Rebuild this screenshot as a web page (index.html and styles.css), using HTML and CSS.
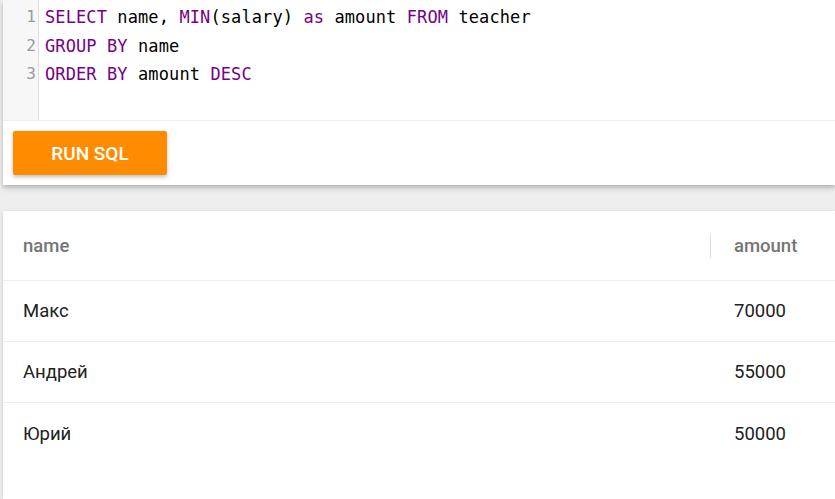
FILE: index.html
```html
<!DOCTYPE html>
<html lang="ru">
<head>
<meta charset="utf-8">
<title>SQL</title>
<link rel="stylesheet" href="styles.css">
</head>
<body>
<div class="editor-card">
  <div class="editor">
    <div class="gutter">
      <div class="ln">1</div>
      <div class="ln">2</div>
      <div class="ln">3</div>
    </div>
    <div class="code">
      <div class="line"><span class="kw">SELECT</span> name, <span class="kw">MIN</span>(salary) <span class="kw">as</span> amount <span class="kw">FROM</span> teacher</div>
      <div class="line"><span class="kw">GROUP</span> <span class="kw">BY</span> name</div>
      <div class="line"><span class="kw">ORDER</span> <span class="kw">BY</span> amount <span class="kw">DESC</span></div>
    </div>
  </div>
  <div class="actions">
    <button class="run">RUN SQL</button>
  </div>
</div>

<div class="table-card">
  <div class="row head">
    <div class="cell c-name">name</div>
    <div class="cell c-amount"><span class="divider"></span>amount</div>
  </div>
  <div class="row">
    <div class="cell c-name">Макс</div>
    <div class="cell c-amount">70000</div>
  </div>
  <div class="row">
    <div class="cell c-name">Андрей</div>
    <div class="cell c-amount">55000</div>
  </div>
  <div class="row last">
    <div class="cell c-name">Юрий</div>
    <div class="cell c-amount">50000</div>
  </div>
</div>
</body>
</html>
```
FILE: styles.css
```css
html, body {
  margin: 0;
  padding: 0;
  background: #eeeeee;
  overflow: hidden;
  height: 100%;
}
body {
  font-family: Roboto, "Noto Sans", sans-serif;
  display: flex;
  flex-direction: column;
}
.editor-card {
  margin-left: 3px;
  background: #fff;
  box-shadow: 0 3px 6px rgba(0,0,0,0.18), 0 2px 3px rgba(0,0,0,0.1);
  flex: none;
}
.editor {
  display: flex;
  height: 121px;
  border-bottom: 1px solid #eeeeee;
  box-sizing: border-box;
}
.gutter {
  width: 36px;
  background: #f7f7f7;
  border-right: 1px solid #dddddd;
  padding-top: 3px;
  box-sizing: border-box;
  font-family: "DejaVu Sans Mono", "Liberation Mono", monospace;
  font-size: 16px;
  color: #999999;
}
.ln {
  height: 28.5px;
  line-height: 28.5px;
  text-align: right;
  padding-right: 2px;
}
.code {
  padding-top: 3px;
  padding-left: 6px;
  font-family: "DejaVu Sans Mono", "Liberation Mono", monospace;
  font-size: 17px;
  letter-spacing: 0.1px;
  color: #000;
}
.line {
  height: 28.5px;
  line-height: 28.5px;
  white-space: pre;
}
.kw {
  color: #770088;
}
.actions {
  padding: 10px;
}
.run {
  width: 154px;
  height: 44px;
  background: #ff8c00;
  color: #fff;
  border: none;
  border-radius: 2px;
  font-family: Roboto, sans-serif;
  font-size: 19px;
  font-weight: 500;
  box-shadow: 0 2px 4px rgba(0,0,0,0.25);
  display: block;
}
.table-card {
  margin-top: 26px;
  margin-left: 3px;
  background: #fff;
  flex: 1;
  min-height: 0;
  box-shadow: 0 1px 4px rgba(0,0,0,0.15);
}
.row {
  display: grid;
  grid-template-columns: 707px 1fr;
  height: 61px;
  box-sizing: border-box;
  align-items: center;
  border-bottom: 1px solid #eeeeee;
  font-size: 18.5px;
  color: #212121;
}
.row.last {
  border-bottom: none;
}
.row.head {
  height: 70px;
  color: #757575;
  font-weight: 500;
}
.cell.c-name {
  padding-left: 20px;
}
.cell.c-amount {
  padding-left: 24px;
  position: relative;
}
.divider {
  position: absolute;
  left: 0;
  top: 50%;
  transform: translateY(-50%);
  height: 24px;
  border-left: 1px solid #e0e0e0;
}
```
